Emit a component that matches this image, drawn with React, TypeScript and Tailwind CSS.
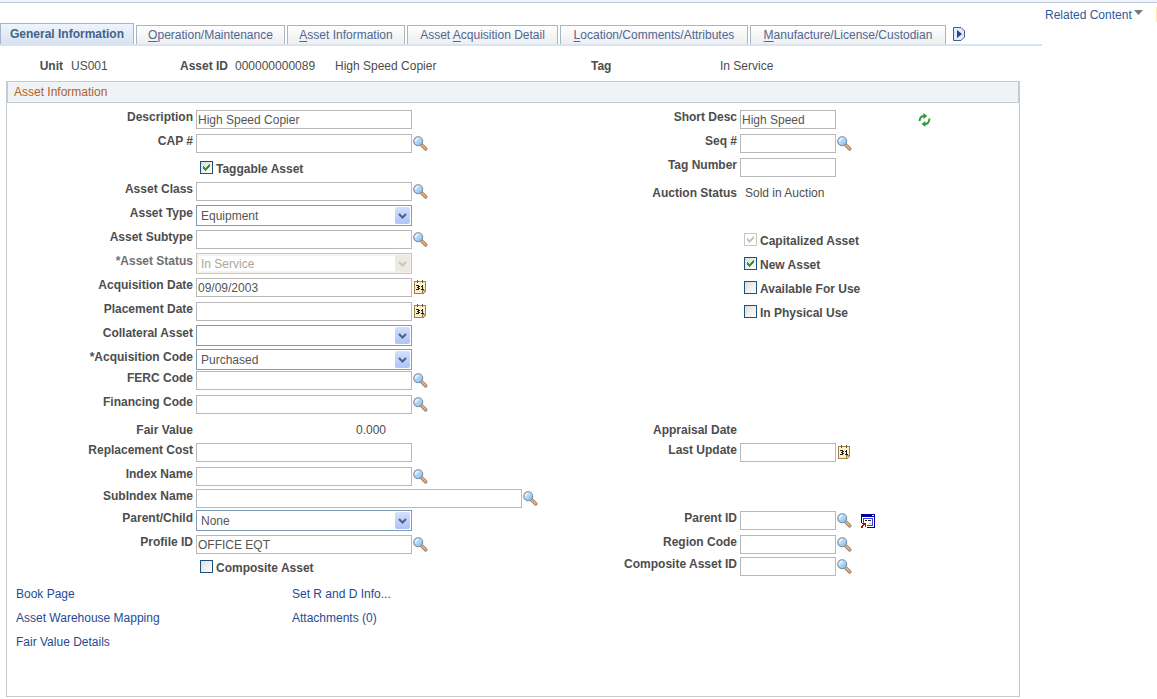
import { ReactNode, useId } from 'react';

type FieldProps = {
  label: string;
  side?: 'left' | 'right';
};

type InputFieldProps = FieldProps & {
  value?: string;
  width?: string;
  children?: ReactNode;
};

type SelectFieldProps = FieldProps & {
  value?: string;
  disabled?: boolean;
};

type CheckFieldProps = FieldProps & {
  checked?: boolean;
  disabled?: boolean;
};

const labelWidth = {
  left: 'w-[186px]',
  right: 'w-[183px]',
};

const checkIndent = {
  left: 'pl-[193px]',
  right: 'pl-[190px]',
};

const LookupButton = ({ label }: { label: string }) => (
  <button type="button" aria-label={`Look up ${label}`} className="mt-1 ml-px h-[15px] w-[15px] shrink-0 cursor-pointer">
    <svg viewBox="0 0 15 15" className="block h-[15px] w-[15px]">
      <defs>
        <linearGradient id="lens" x1="0" y1="0" x2="1" y2="1">
          <stop offset="0.1" stopColor="#e6f4ff" />
          <stop offset="1" stopColor="#6db4ea" />
        </linearGradient>
      </defs>
      <path d="M8.6 8.8 L12.6 12.8" stroke="#8a7a78" strokeWidth="3.6" strokeLinecap="round" />
      <path d="M9 9 L12.6 12.6" stroke="#f3b064" strokeWidth="2" strokeLinecap="round" />
      <circle cx="5.2" cy="5.2" r="4.5" fill="url(#lens)" stroke="#7c8ea6" strokeWidth="1.1" />
      <path d="M2.6 5 A2.7 2.7 0 0 1 5 2.5" fill="none" stroke="#fff" strokeWidth="1" />
    </svg>
  </button>
);

const CalendarButton = ({ label }: { label: string }) => (
  <button type="button" aria-label={`Choose ${label}`} className="mt-1 ml-0.5 h-[14px] w-3 shrink-0 cursor-pointer">
    <svg viewBox="0 0 12 14" className="block h-[14px] w-3" shapeRendering="crispEdges">
      <path d="M0 1 H12 V11 L9 14 H0 Z" fill="#a08450" />
      <path d="M1 2 H11 V10 H8 V13 H1 Z" fill="#fdf0c8" />
      <path d="M9 11 H11 L9 13 Z" fill="#e2c78c" />
      <path d="M3 0 H4 V3 H3 Z M8 0 H9 V3 H8 Z" fill="#6d5a35" />
      <path
        d="M2 5 H5 V6 H6 V7 H5 V8 H6 V9 H5 V10 H2 V9 H4 V8 H3 V7 H4 V6 H2 Z M7 6 H8 V5 H9 V9 H10 V10 H7 V9 H8 V7 H7 Z"
        fill="#222"
      />
    </svg>
  </button>
);

const RefreshIcon = () => (
  <svg viewBox="0 0 13 14" className="block h-[14px] w-[13px]">
    <path d="M6.5 3 C4 2.6 1.6 4.4 1.6 8" fill="none" stroke="#2f9a36" strokeWidth="2" />
    <path d="M5.4 0 L9.2 3 L5.4 6 Z" fill="#2f9a36" />
    <path d="M6.5 11 C9 11.4 11.4 9.6 11.4 5.6" fill="none" stroke="#2f9a36" strokeWidth="2" />
    <path d="M7.4 8 L3.6 11 L7.4 14 Z" fill="#2f9a36" />
  </svg>
);

const WindowIcon = () => (
  <svg viewBox="0 0 14 14" className="block h-[14px] w-[14px]" shapeRendering="crispEdges">
    <path d="M0 0 H14 V14 H6 V13 H13 V3 H1 V9 H0 Z" fill="#00009c" />
    <path d="M1 3 H13 V13 H6 V9 H1 Z" fill="#fff" />
    <path d="M11 1 H13 V2 H11 Z" fill="#fff" />
    <path d="M2 4 H12 V12 H6 V11 H11 V5 H3 V9 H2 Z" fill="#3a3af0" />
    <path d="M4 6 H6 V7 H4 Z M7 6 H10 V7 H7 Z" fill="#222" />
    <path d="M8 9 H10 V10 H8 Z" fill="#e8c12c" />
    <path d="M1 9 H5 V13 H4 V11 H3 V12 H2 V14 H0 V12 H1 V11 H2 V10 H1 Z" fill="#c40000" />
  </svg>
);

const NextTabsIcon = () => (
  <svg viewBox="0 0 12 14" className="block h-[14px] w-3">
    <path d="M0.5 0.5 H8 L11.5 4 V10 L8 13.5 H0.5 Z" fill="#dcebfd" stroke="#4c5c88" />
    <path d="M4 3 L9 7 L4 11 Z" fill="#2f4676" />
  </svg>
);

const Row = ({ height = 'h-6', children }: { height?: string; children: ReactNode }) => (
  <div className={`grid grid-cols-[547px_1fr] ${height}`}>{children}</div>
);

const InputField = ({ label, side = 'left', value = '', width = 'w-[216px]', children }: InputFieldProps) => {
  const id = useId();

  return (
    <div className="flex items-start">
      <label htmlFor={id} className={`${labelWidth[side]} shrink-0 text-right font-bold leading-[18px]`}>
        {label}
      </label>
      <input
        id={id}
        type="text"
        defaultValue={value}
        className={`${width} mt-0.5 ml-[3px] h-[19px] shrink-0 border border-[#b8b8b8] bg-white px-px text-[#555]`}
      />
      {children}
    </div>
  );
};

const SelectField = ({ label, side = 'left', value = '', disabled = false }: SelectFieldProps) => {
  const id = useId();

  return (
    <div className="flex items-start">
      <label
        htmlFor={id}
        className={`${labelWidth[side]} shrink-0 text-right font-bold leading-[18px] ${disabled ? 'text-[#707070]' : ''}`}
      >
        {label}
      </label>
      <div className="relative mt-px ml-[3px] w-[216px] shrink-0">
        <select
          id={id}
          defaultValue={value}
          disabled={disabled}
          className="block h-[21px] w-full appearance-none border border-[#7f9db9] bg-white px-1 text-[#555] disabled:border-[#c9c7ba] disabled:text-[#aca899] disabled:opacity-100 disabled:shadow-[inset_0_0_0_2px_#f5f4ea]"
        >
          <option>{value}</option>
        </select>
        <span
          className={`pointer-events-none absolute top-0.5 right-0.5 flex h-[17px] w-[15px] items-center justify-center rounded-[2px] ${
            disabled ? 'bg-[#ecebe2] text-[#c9c7ba]' : 'bg-linear-to-b from-[#d3e0fd] to-[#adc3f8] text-[#4d6185]'
          }`}
        >
          <svg viewBox="0 0 9 6" className="h-1.5 w-[9px]">
            <path d="M1 1 L4.5 4.5 L8 1" fill="none" stroke="currentColor" strokeWidth="2" />
          </svg>
        </span>
      </div>
    </div>
  );
};

const CheckField = ({ label, side = 'left', checked = false, disabled = false }: CheckFieldProps) => {
  const id = useId();

  return (
    <div className={`flex items-start ${checkIndent[side]}`}>
      <span className="relative mt-[5px] h-[13px] w-[13px] shrink-0">
        <input
          id={id}
          type="checkbox"
          defaultChecked={checked}
          disabled={disabled}
          className="peer block h-[13px] w-[13px] appearance-none border border-[#1d5180] bg-linear-to-br from-[#dcdcd7] to-white disabled:border-[#c9c7ba] disabled:bg-none"
        />
        <svg
          viewBox="0 0 13 13"
          shapeRendering="crispEdges"
          className="pointer-events-none absolute inset-0 hidden text-[#21a121] peer-checked:block peer-disabled:text-[#c9c7ba]"
        >
          <path
            d="M3 5 H4 V6 H5 V7 H6 V6 H7 V5 H8 V4 H9 V3 H10 V6 H9 V7 H8 V8 H7 V9 H6 V10 H5 V9 H4 V8 H3 Z"
            fill="currentColor"
          />
        </svg>
      </span>
      <label htmlFor={id} className="mt-1 ml-[3px] font-bold leading-[18px]">
        {label}
      </label>
    </div>
  );
};

const TextField = ({ label, side = 'left', children }: FieldProps & { children?: ReactNode }) => (
  <div className="flex items-start pt-1 leading-[18px]">
    <span className={`${labelWidth[side]} shrink-0 text-right font-bold`}>{label}</span>
    {children}
  </div>
);

const tabs = [
  { before: '', key: 'O', after: 'peration/Maintenance', width: 'w-[149px]' },
  { before: '', key: 'A', after: 'sset Information', width: 'w-[118px]' },
  { before: 'Asset ', key: 'A', after: 'cquisition Detail', width: 'w-[151px]' },
  { before: '', key: 'L', after: 'ocation/Comments/Attributes', width: 'w-[188px]' },
  { before: '', key: 'M', after: 'anufacture/License/Custodian', width: 'w-[196px]' },
];

const Tabs = () => (
  <nav className="flex h-[43px] items-end gap-0.5 border-b-2 border-[#d9e4f3] whitespace-nowrap">
    <a
      href="#general"
      aria-current="page"
      className="flex h-[21px] w-[134px] items-center justify-center border border-b-0 border-[#a9b4c4] bg-linear-to-b from-[#eef4fc] to-[#d7e3f3] font-bold text-[#466287]"
    >
      General Information
    </a>
    {tabs.map(({ before, key, after, width }) => (
      <a
        key={after}
        href="#tab"
        className={`${width} h-[19px] border border-b-0 border-[#a9b4c4] bg-linear-to-b from-white to-[#eeeeee] text-center leading-[19px] text-[#4f6792]`}
      >
        {before}
        <span className="underline underline-offset-2">{key}</span>
        {after}
      </a>
    ))}
    <button type="button" aria-label="Show next tabs" className="mb-[3px] ml-[5px] cursor-pointer">
      <NextTabsIcon />
    </button>
  </nav>
);

const AssetHeader = () => (
  <div className="grid h-[35px] grid-cols-[71px_109px_55px_100px_256px_129px_1fr] items-center pt-1">
    <span className="pr-2 text-right font-bold">Unit</span>
    <span>US001</span>
    <span className="font-bold">Asset ID</span>
    <span>000000000089</span>
    <span>High Speed Copier</span>
    <span className="font-bold">Tag</span>
    <span>In Service</span>
  </div>
);

const AssetForm = () => (
  <form className="pt-[5px]">
    <Row>
      <InputField label="Description" value="High Speed Copier" />
      <div className="flex">
        <InputField label="Short Desc" side="right" value="High Speed" width="w-24" />
        <button type="button" aria-label="Refresh" className="mt-[5px] ml-[82px] h-[14px] cursor-pointer">
          <RefreshIcon />
        </button>
      </div>
    </Row>
    <Row>
      <InputField label="CAP #">
        <LookupButton label="CAP #" />
      </InputField>
      <InputField label="Seq #" side="right" width="w-24">
        <LookupButton label="Seq #" />
      </InputField>
    </Row>
    <Row>
      <CheckField label="Taggable Asset" checked />
      <InputField label="Tag Number" side="right" width="w-24" />
    </Row>
    <Row>
      <InputField label="Asset Class">
        <LookupButton label="Asset Class" />
      </InputField>
      <TextField label="Auction Status" side="right">
        <span className="ml-2">Sold in Auction</span>
      </TextField>
    </Row>
    <Row>
      <SelectField label="Asset Type" value="Equipment" />
    </Row>
    <Row>
      <InputField label="Asset Subtype">
        <LookupButton label="Asset Subtype" />
      </InputField>
      <CheckField label="Capitalized Asset" side="right" checked disabled />
    </Row>
    <Row>
      <SelectField label="*Asset Status" value="In Service" disabled />
      <CheckField label="New Asset" side="right" checked />
    </Row>
    <Row>
      <InputField label="Acquisition Date" value="09/09/2003">
        <CalendarButton label="Acquisition Date" />
      </InputField>
      <CheckField label="Available For Use" side="right" />
    </Row>
    <Row>
      <InputField label="Placement Date">
        <CalendarButton label="Placement Date" />
      </InputField>
      <CheckField label="In Physical Use" side="right" />
    </Row>
    <Row>
      <SelectField label="Collateral Asset" />
    </Row>
    <Row height="h-[21px]">
      <SelectField label="*Acquisition Code" value="Purchased" />
    </Row>
    <Row>
      <InputField label="FERC Code">
        <LookupButton label="FERC Code" />
      </InputField>
    </Row>
    <Row>
      <InputField label="Financing Code">
        <LookupButton label="Financing Code" />
      </InputField>
    </Row>
    <Row>
      <TextField label="Fair Value">
        <span className="ml-[3px] w-[190px] text-right">0.000</span>
      </TextField>
      <TextField label="Appraisal Date" side="right" />
    </Row>
    <Row>
      <InputField label="Replacement Cost" />
      <InputField label="Last Update" side="right" width="w-24">
        <CalendarButton label="Last Update" />
      </InputField>
    </Row>
    <Row height="h-[22px]">
      <InputField label="Index Name">
        <LookupButton label="Index Name" />
      </InputField>
    </Row>
    <Row height="h-[22px]">
      <InputField label="SubIndex Name" width="w-[326px]">
        <LookupButton label="SubIndex Name" />
      </InputField>
    </Row>
    <Row>
      <SelectField label="Parent/Child" value="None" />
      <InputField label="Parent ID" side="right" width="w-24">
        <LookupButton label="Parent ID" />
        <button type="button" aria-label="Open parent asset" className="mt-[5px] ml-[9px] cursor-pointer">
          <WindowIcon />
        </button>
      </InputField>
    </Row>
    <Row height="h-[22px]">
      <InputField label="Profile ID" value="OFFICE EQT">
        <LookupButton label="Profile ID" />
      </InputField>
      <InputField label="Region Code" side="right" width="w-24">
        <LookupButton label="Region Code" />
      </InputField>
    </Row>
    <Row>
      <CheckField label="Composite Asset" />
      <InputField label="Composite Asset ID" side="right" width="w-24">
        <LookupButton label="Composite Asset ID" />
      </InputField>
    </Row>
  </form>
);

const AssetLinks = () => (
  <div className="grid grid-cols-[276px_1fr] pt-[3px] pb-[42px] pl-[9px] leading-6 text-[#1f4a94]">
    <a href="#book">Book Page</a>
    <a href="#rd">Set R and D Info...</a>
    <a href="#warehouse">Asset Warehouse Mapping</a>
    <a href="#attachments">Attachments (0)</a>
    <a href="#fair-value">Fair Value Details</a>
  </div>
);

export default function App() {
  return (
    <div className="bg-white font-['Liberation_Sans',Arial,sans-serif] text-[12px] text-[#4d4d4d]">
      <div className="h-[3px] border-b border-[#c3cad4] bg-[#edf4fc]" />
      <div className="flex items-start">
        <main className="min-w-0 flex-1">
          <Tabs />
          <AssetHeader />
          <section className="mr-[22px] ml-1.5 border border-t-0 border-[#c5cad1]">
            <h2 className="flex h-[22px] items-center border border-[#c5cad1] bg-[#f0f3f5] pl-1.5 text-[#b0602d]">
              Asset Information
            </h2>
            <AssetForm />
            <AssetLinks />
          </section>
        </main>
        <aside className="mt-1 flex h-[15px] w-[115px] items-center justify-between border-r border-[#ffe9ac] pl-[3px] whitespace-nowrap">
          <button type="button" className="flex cursor-pointer items-center gap-0.5 text-[#2f5a9c]">
            Related Content
            <svg viewBox="0 0 9 5" className="mb-1 h-[5px] w-[9px]">
              <path d="M0 0 H9 L4.5 5 Z" fill="#777" />
            </svg>
          </button>
        </aside>
      </div>
    </div>
  );
}
